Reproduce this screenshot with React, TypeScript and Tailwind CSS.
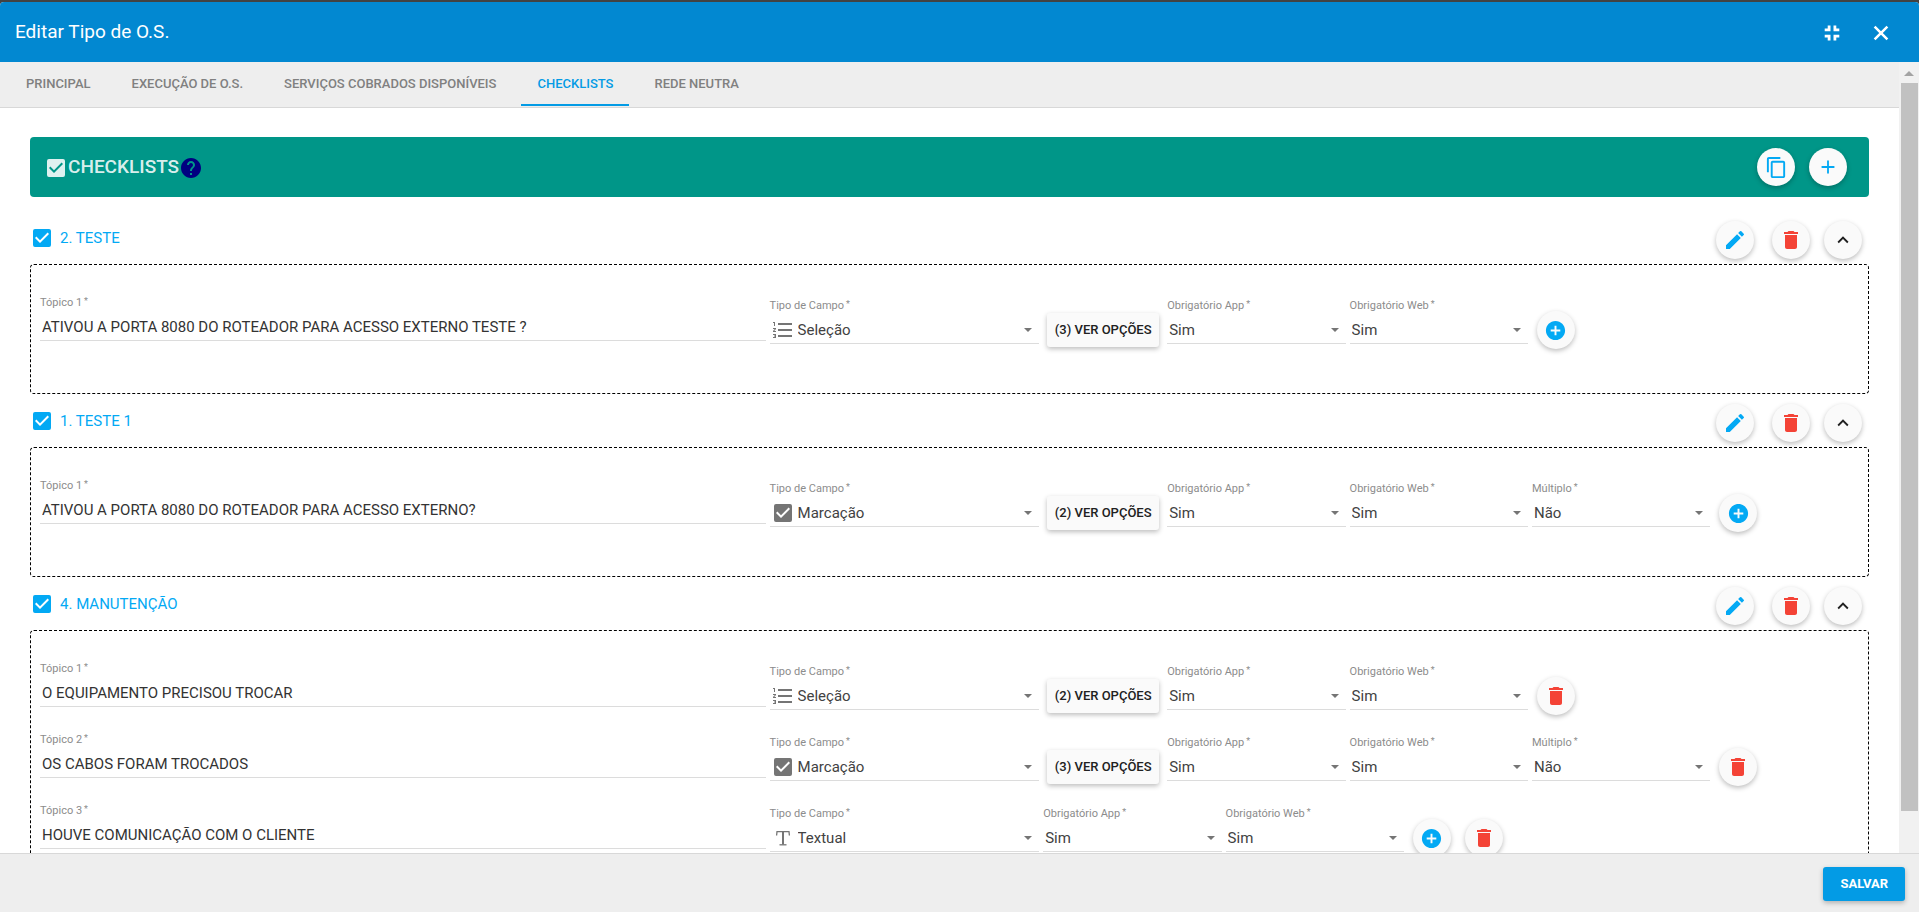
import { useState, type ReactNode } from "react";
import {
  MdAdd,
  MdAddCircle,
  MdCheckBox,
  MdContentCopy,
  MdDelete,
  MdEdit,
  MdExpandLess,
  MdFormatListNumbered,
  MdHelp,
} from "react-icons/md";

type Tipo = "Seleção" | "Marcação" | "Textual";

type Topico = {
  texto: string;
  tipo: Tipo;
  opcoes?: number;
  multiplo?: string;
  add?: boolean;
  remove?: boolean;
};

type Checklist = {
  id: number;
  nome: string;
  topicos: Topico[];
};

const tabs = [
  "PRINCIPAL",
  "EXECUÇÃO DE O.S.",
  "SERVIÇOS COBRADOS DISPONÍVEIS",
  "CHECKLISTS",
  "REDE NEUTRA",
];

const checklists: Checklist[] = [
  {
    id: 2,
    nome: "TESTE",
    topicos: [
      {
        texto: "ATIVOU A PORTA 8080 DO ROTEADOR PARA ACESSO EXTERNO TESTE ?",
        tipo: "Seleção",
        opcoes: 3,
        add: true,
      },
    ],
  },
  {
    id: 1,
    nome: "TESTE 1",
    topicos: [
      {
        texto: "ATIVOU A PORTA 8080 DO ROTEADOR PARA ACESSO EXTERNO?",
        tipo: "Marcação",
        opcoes: 2,
        multiplo: "Não",
        add: true,
      },
    ],
  },
  {
    id: 4,
    nome: "MANUTENÇÃO",
    topicos: [
      { texto: "O EQUIPAMENTO PRECISOU TROCAR", tipo: "Seleção", opcoes: 2, remove: true },
      { texto: "OS CABOS FORAM TROCADOS", tipo: "Marcação", opcoes: 3, multiplo: "Não", remove: true },
      { texto: "HOUVE COMUNICAÇÃO COM O CLIENTE", tipo: "Textual", add: true, remove: true },
    ],
  },
];

function TextualIcon() {
  return (
    <svg width="24" height="24" viewBox="0 0 24 24" fill="none" stroke="currentColor" aria-hidden="true">
      <path d="M5.6 9.5L6 5.7h12l.4 3.8" strokeWidth="1.3" />
      <path d="M12 5.5v13" strokeWidth="2" />
      <path d="M8.5 18.8h7" strokeWidth="1.3" />
    </svg>
  );
}

function ExitFullscreenIcon() {
  return (
    <svg width="24" height="24" viewBox="0 0 24 24" fill="none" stroke="currentColor" strokeWidth="2.8" aria-hidden="true">
      <path d="M4.7 8.9h4.4V4.6M19.3 8.9h-4.4V4.6M4.7 15.1h4.4v4.4M19.3 15.1h-4.4v4.4" />
    </svg>
  );
}

function CloseIcon() {
  return (
    <svg width="24" height="24" viewBox="0 0 24 24" fill="none" stroke="currentColor" strokeWidth="2.5" aria-hidden="true">
      <path d="M5.6 5.6l12.8 12.8M18.4 5.6L5.6 18.4" />
    </svg>
  );
}

function TipoIcon({ tipo }: { tipo: Tipo }) {
  if (tipo === "Seleção") return <MdFormatListNumbered size={24} />;
  if (tipo === "Marcação") return <MdCheckBox size={24} />;
  return <TextualIcon />;
}

function RoundButton({ label, className = "", children }: { label: string; className?: string; children: ReactNode }) {
  return (
    <button
      type="button"
      aria-label={label}
      className={`flex size-[38px] shrink-0 items-center justify-center rounded-full bg-[#fafafa] shadow-[0_2px_5px_rgba(0,0,0,0.26)] ${className}`}
    >
      {children}
    </button>
  );
}

function FieldLabel({ htmlFor, children }: { htmlFor: string; children: ReactNode }) {
  return (
    <label htmlFor={htmlFor} className="block h-[14px] text-[11px] leading-[14px] text-[#8c8c8c]">
      {children}
      <span className="ml-[2px] align-top text-[9px] leading-[10px]">*</span>
    </label>
  );
}

function SelectField({
  id,
  label,
  value,
  options,
  icon,
  className,
}: {
  id: string;
  label: string;
  value: string;
  options: string[];
  icon?: ReactNode;
  className: string;
}) {
  return (
    <div className={`mt-[3px] shrink-0 pr-1 ${className}`}>
      <FieldLabel htmlFor={id}>{label}</FieldLabel>
      <div className="mt-1 flex h-[27px] items-center border-b border-[#dcdcdc] pr-[7px] pl-px">
        {icon && <span className="mr-[2px] shrink-0 text-[#757575]">{icon}</span>}
        <select
          id={id}
          defaultValue={value}
          className="min-w-0 flex-1 appearance-none bg-transparent pl-px text-[15px] leading-5 text-[#424242] outline-none"
        >
          {options.map((o) => (
            <option key={o}>{o}</option>
          ))}
        </select>
        <svg width="8" height="4" viewBox="0 0 8 4" className="pointer-events-none shrink-0" aria-hidden="true">
          <path d="M0 0h8L4 4z" fill="#757575" />
        </svg>
      </div>
    </div>
  );
}

function TopicoRow({ topico, numero, prefix }: { topico: Topico; numero: number; prefix: string }) {
  const id = `${prefix}-${numero}`;
  return (
    <div className="flex min-h-[71px] items-start">
      <div className="w-[40%] shrink-0 pr-1">
        <FieldLabel htmlFor={`${id}-texto`}>Tópico {numero}</FieldLabel>
        <input
          id={`${id}-texto`}
          type="text"
          defaultValue={topico.texto}
          className="mt-1 block h-[27px] w-full border-b border-[#dcdcdc] bg-transparent px-[2px] text-[15px] text-[#333333] outline-none"
        />
      </div>
      <SelectField
        id={`${id}-tipo`}
        label="Tipo de Campo"
        value={topico.tipo}
        options={["Seleção", "Marcação", "Textual"]}
        icon={<TipoIcon tipo={topico.tipo} />}
        className="w-[15%]"
      />
      {topico.opcoes && (
        <button
          type="button"
          className="mt-[17px] mr-2 ml-1 h-[34px] w-[112px] shrink-0 rounded-[3px] bg-[#fafafa] text-[13px] font-medium whitespace-nowrap text-[#212121] shadow-[0_2px_5px_rgba(0,0,0,0.26)]"
        >
          ({topico.opcoes}) VER OPÇÕES
        </button>
      )}
      <SelectField id={`${id}-app`} label="Obrigatório App" value="Sim" options={["Sim", "Não"]} className="w-[10%]" />
      <SelectField id={`${id}-web`} label="Obrigatório Web" value="Sim" options={["Sim", "Não"]} className="w-[10%]" />
      {topico.multiplo && (
        <SelectField
          id={`${id}-multiplo`}
          label="Múltiplo"
          value={topico.multiplo}
          options={["Sim", "Não"]}
          className="w-[10%]"
        />
      )}
      <div className="mt-[15px] ml-[5px] flex gap-[14px]">
        {topico.add && (
          <RoundButton label="Adicionar tópico" className="text-[#03a9f4]">
            <MdAddCircle size={23} />
          </RoundButton>
        )}
        {topico.remove && (
          <RoundButton label="Remover tópico" className="text-[#f44336]">
            <MdDelete size={24} />
          </RoundButton>
        )}
      </div>
    </div>
  );
}

function ChecklistSection({ checklist }: { checklist: Checklist }) {
  return (
    <section>
      <div className="flex h-[53px] items-center justify-between pr-[7px]">
        <label className="flex items-center gap-[6px] text-[#03a9f4]">
          <input type="checkbox" defaultChecked className="sr-only" />
          <MdCheckBox size={24} />
          <span className="text-[15px] leading-6">
            {checklist.id}. {checklist.nome}
          </span>
        </label>
        <div className="flex items-center pt-1">
          <RoundButton label="Editar checklist" className="mr-[18px] text-[#03a9f4]">
            <MdEdit size={24} />
          </RoundButton>
          <RoundButton label="Excluir checklist" className="mr-[14px] text-[#f44336]">
            <MdDelete size={24} />
          </RoundButton>
          <RoundButton label="Recolher checklist" className="text-[#212121]">
            <MdExpandLess size={22} />
          </RoundButton>
        </div>
      </div>
      <div className="rounded border border-dashed border-black pt-[31px] pr-1 pb-[26px] pl-[9px]">
        {checklist.topicos.map((t, i) => (
          <TopicoRow key={t.texto} topico={t} numero={i + 1} prefix={`checklist-${checklist.id}`} />
        ))}
      </div>
    </section>
  );
}

export default function App() {
  const [active, setActive] = useState("CHECKLISTS");

  return (
    <div className="h-screen overflow-hidden bg-[#424242] pt-[2px] font-['Roboto',sans-serif]">
      <div className="flex h-full flex-col overflow-hidden rounded-t bg-white">
        <header className="flex h-[60px] shrink-0 items-center justify-between bg-[#0288d1] pr-[26px] pl-[15px] text-white">
          <h1 className="text-[19px]">Editar Tipo de O.S.</h1>
          <div className="flex items-center gap-[25px] pt-px">
            <button type="button" aria-label="Sair da tela cheia">
              <ExitFullscreenIcon />
            </button>
            <button type="button" aria-label="Fechar">
              <CloseIcon />
            </button>
          </div>
        </header>

        <div className="flex min-h-0 flex-1">
          <main className="min-w-0 flex-1 overflow-hidden">
            <nav className="flex h-[46px] gap-[9px] border-b border-[#d8d8d8] bg-[#eeeeee] px-[10px]">
              {tabs.map((tab) => (
                <button
                  key={tab}
                  type="button"
                  onClick={() => setActive(tab)}
                  className={`h-11 border-b-2 px-4 pt-[2px] text-[13px] font-medium whitespace-nowrap ${
                    tab === active ? "border-[#039be5] text-[#039be5]" : "border-transparent text-[#808080]"
                  }`}
                >
                  {tab}
                </button>
              ))}
            </nav>

            <div className="px-[30px] pt-[29px]">
              <div className="mb-[14px] flex h-[60px] items-center justify-between rounded bg-[#009688] pr-[22px] pl-[14px]">
                <h2 className="flex items-center pt-[2px] text-[19px] font-medium text-white/87">
                  <MdCheckBox size={24} />
                  <span className="pb-[2px]">CHECKLISTS</span>
                  <MdHelp size={24} className="text-[#000080]" />
                </h2>
                <div className="flex items-center gap-[14px]">
                  <RoundButton label="Copiar checklist" className="text-[#03a9f4]">
                    <MdContentCopy size={23} />
                  </RoundButton>
                  <RoundButton label="Novo checklist" className="text-[#03a9f4]">
                    <MdAdd size={22} />
                  </RoundButton>
                </div>
              </div>

              {checklists.map((c) => (
                <ChecklistSection key={c.id} checklist={c} />
              ))}
            </div>
          </main>

          {/* Scroll rail */}
          <div className="flex w-5 shrink-0 flex-col items-center bg-[#f1f1f1] pt-[9px]" aria-hidden="true">
            <svg width="10" height="5" viewBox="0 0 10 5">
              <path d="M5 0l5 5H0z" fill="#a3a3a3" />
            </svg>
            <div className="mt-[7px] mb-[42px] w-[17px] flex-1 bg-[#c1c1c1]" />
          </div>
        </div>

        <footer className="flex h-[59px] shrink-0 items-center justify-end border-t border-[#d8d8d8] bg-[#eeeeee] pt-[2px] pr-[14px]">
          <button
            type="button"
            className="h-[34px] rounded-[3px] bg-[#039be5] px-[17px] text-[13px] font-bold text-white shadow-[0_2px_5px_rgba(0,0,0,0.26)]"
          >
            SALVAR
          </button>
        </footer>
      </div>
    </div>
  );
}
